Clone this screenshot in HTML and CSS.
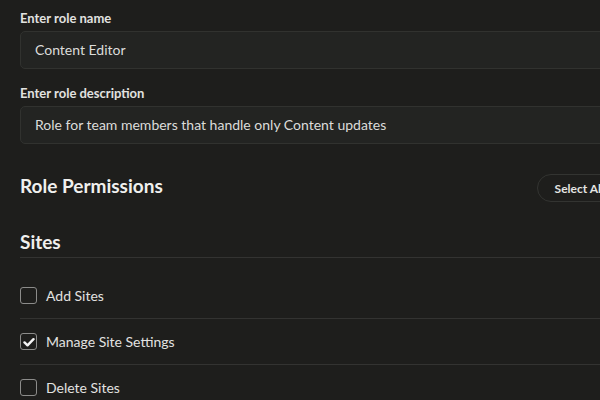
FILE: index.html
```html
<!DOCTYPE html>
<html>
<head>
<meta charset="utf-8">
<link rel="stylesheet" href="styles.css">
</head>
<body>
<div class="page">
  <div class="field">
    <label class="label">Enter role name</label>
    <div class="input">Content Editor</div>
  </div>
  <div class="field">
    <label class="label">Enter role description</label>
    <div class="input">Role for team members that handle only Content updates</div>
  </div>
  <div class="perm-head">
    <h2 class="title">Role Permissions</h2>
    <button class="btn">Select All</button>
  </div>
  <h3 class="section">Sites</h3>
  <ul class="list">
    <li class="row"><span class="box"></span><span class="text">Add Sites</span></li>
    <li class="row"><span class="box checked"><svg viewBox="0 0 16 16" width="12" height="12"><path d="M2 8.6 L6 12.4 L14 4.2" fill="none" stroke="#f4f4f4" stroke-width="3.2" stroke-linecap="round" stroke-linejoin="round"/></svg></span><span class="text">Manage Site Settings</span></li>
    <li class="row"><span class="box"></span><span class="text">Delete Sites</span></li>
  </ul>
</div>
</body>
</html>
```
FILE: styles.css
```css
html, body {
  margin: 0;
  padding: 0;
  background: #1e1e1c;
  overflow: hidden;
}
body {
  font-family: Lato, "Open Sans", sans-serif;
  color: #e6e6e4;
}
.page {
  width: 602px;
  padding: 10px 0 0 20px;
}
.field {
  display: flex;
  flex-direction: column;
}
.field + .field {
  margin-top: 16px;
}
.label {
  font-size: 13px;
  font-weight: 700;
  line-height: 16px;
  color: #e2e2e0;
  margin-bottom: 5px;
}
.input {
  height: 36px;
  border: 1px solid #31322f;
  border-radius: 5px;
  background: #232422;
  padding: 0 14px;
  font-size: 14px;
  line-height: 36px;
  color: #dcdcda;
}
.perm-head {
  display: flex;
  justify-content: space-between;
  align-items: center;
  margin-top: 30px;
}
.title {
  margin: 0 0 4px 0;
  font-size: 19px;
  font-weight: 700;
  line-height: 24px;
  color: #f0f0ee;
}
.btn {
  height: 28px;
  padding: 0 17px;
  border: 1px solid #333431;
  border-radius: 14px;
  background: transparent;
  font-family: Lato, sans-serif;
  font-size: 12px;
  font-weight: 700;
  color: #e4e4e2;
}
.section {
  margin: 28px 0 0 0;
  padding-bottom: 3px;
  font-size: 19px;
  font-weight: 700;
  line-height: 24px;
  color: #f0f0ee;
  border-bottom: 1px solid #333331;
}
.list {
  list-style: none;
  margin: 15px 0 0 0;
  padding: 0;
}
.row {
  display: flex;
  align-items: center;
  gap: 9px;
  padding: 14px 0;
  border-bottom: 1px solid #333331;
}
.box {
  box-sizing: border-box;
  width: 17px;
  height: 17px;
  border: 1.5px solid #8c8c8a;
  border-radius: 3px;
  display: flex;
  align-items: center;
  justify-content: center;
}
.text {
  font-size: 14px;
  line-height: 17px;
  color: #e2e2e0;
}
```
